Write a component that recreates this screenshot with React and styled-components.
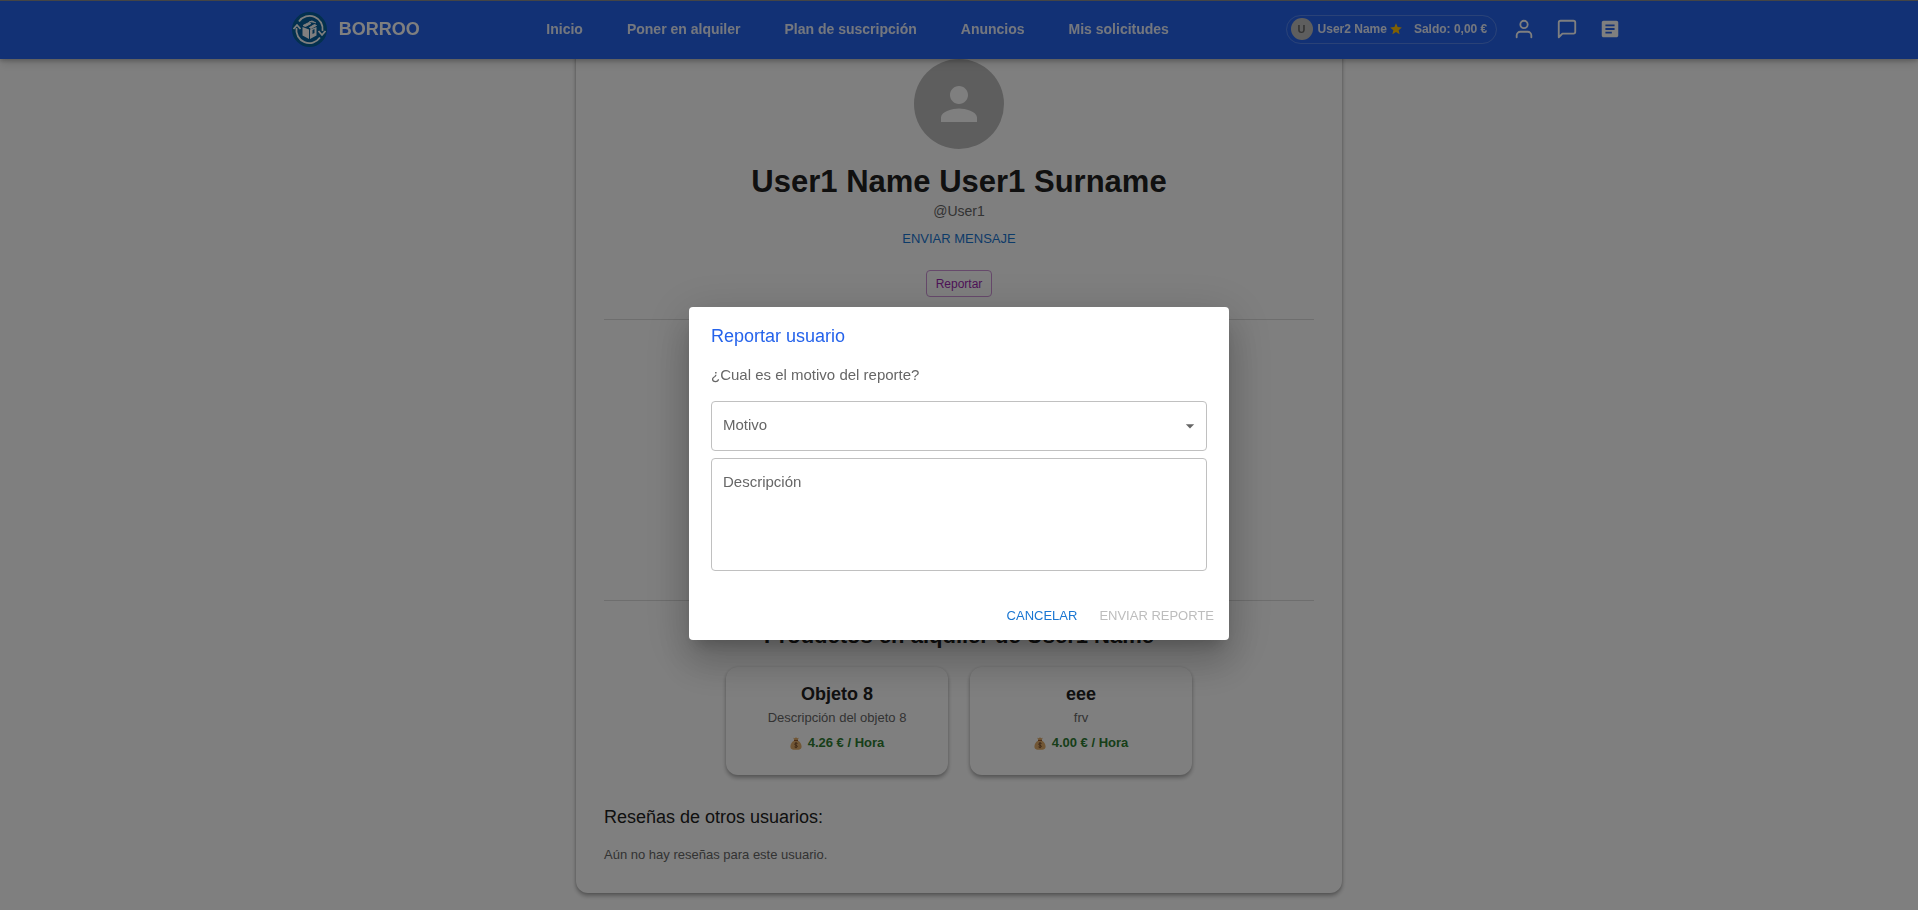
import React from "react";
import styled, { createGlobalStyle } from "styled-components";
import { FiUser, FiMessageSquare } from "react-icons/fi";
import { MdArticle, MdPerson, MdStar, MdArrowDropDown } from "react-icons/md";

const GlobalStyle = createGlobalStyle`
  * { box-sizing: border-box; }
  body {
    margin: 0;
    background: #fff;
    color: #212121;
    font-family: "Liberation Sans", Arial, sans-serif;
    font-size: 13px;
    line-height: 20px;
    overflow: hidden;
  }
  h1, h2, h3, p { margin: 0; }
  button, select, textarea { font-family: inherit; }
  a { color: inherit; text-decoration: none; }
`;

const Header = styled.header`
  position: fixed;
  top: 0;
  left: 0;
  right: 0;
  z-index: 10;
  display: flex;
  justify-content: center;
  height: 59px;
  border-top: 1px solid #8a8a8a;
  background: #2563eb;
  box-shadow: 0 2px 4px rgba(0, 0, 0, 0.2), 0 4px 10px rgba(0, 0, 0, 0.14);
  color: #fff;
`;

const HeaderInner = styled.div`
  display: flex;
  align-items: center;
  justify-content: space-between;
  width: 70%;
  height: 56px;
  padding: 0 4px;
`;

const Brand = styled.a`
  display: flex;
  align-items: center;
  gap: 12px;
  font-size: 18px;
  font-weight: 700;
`;

const Nav = styled.nav`
  display: flex;
  gap: 44px;
  padding-left: 10px;
  font-size: 14px;
  font-weight: 700;
  color: #e8eefc;
`;

const Tools = styled.div`
  display: flex;
  align-items: center;
  gap: 11px;
`;

const Pill = styled.div`
  display: flex;
  align-items: center;
  height: 29px;
  padding: 0 9px 0 4px;
  border: 1px solid rgba(255, 255, 255, 0.22);
  border-radius: 15px;
  font-size: 12px;
  font-weight: 700;
  white-space: nowrap;
  color: #e8eefc;
`;

const Initial = styled.span`
  display: grid;
  place-items: center;
  width: 22px;
  height: 22px;
  margin-right: 5px;
  border-radius: 50%;
  background: #bdbdbd;
  color: #666;
  font-size: 11px;
`;

const Star = styled(MdStar)`
  margin: 0 11px 0 2px;
  color: #ffc107;
`;

const IconButton = styled.button`
  display: grid;
  place-items: center;
  width: 32px;
  height: 32px;
  padding: 0;
  border: 0;
  background: none;
  color: #fff;
`;

const Profile = styled.main`
  width: 40%;
  min-width: 620px;
  max-width: 766px;
  margin: 0 auto 16px;
  padding: 59px 28px 28px;
  border-radius: 12px;
  background: #fff;
  box-shadow: 0 3px 4px rgba(0, 0, 0, 0.3), 0 0 3px rgba(0, 0, 0, 0.16);
`;

const Summary = styled.section`
  display: flex;
  flex-direction: column;
  align-items: center;
  padding-bottom: 22px;
  border-bottom: 1px solid #dcdcdc;
`;

const Avatar = styled.div`
  display: grid;
  place-items: center;
  width: 90px;
  height: 90px;
  margin-bottom: 12px;
  border-radius: 50%;
  background: #bdbdbd;
  color: #fff;
`;

const Name = styled.h1`
  padding-top: 1px;
  font-size: 31px;
  line-height: 39px;
`;

const Handle = styled.p`
  font-size: 14px;
  color: #666;
`;

const MessageButton = styled.button`
  height: 30px;
  margin: 2px 0 17px;
  padding: 0 8px;
  border: 0;
  background: none;
  color: #1976d2;
  font-size: 13px;
`;

const ReportButton = styled.button`
  height: 27px;
  padding: 0 9px;
  border: 1px solid #cd93d7;
  border-radius: 4px;
  background: none;
  color: #9c27b0;
  font-size: 12px;
`;

const Spacer = styled.section`
  height: 281px;
  border-bottom: 1px solid #dcdcdc;
`;

const Products = styled.section`
  padding-top: 20px;
  text-align: center;
`;

const ProductsTitle = styled.h2`
  font-size: 22px;
  line-height: 30px;
`;

const ProductList = styled.div`
  display: flex;
  justify-content: center;
  gap: 22px;
  margin: 16px 0 30px;
`;

const ProductCard = styled.article`
  width: 222px;
  height: 108px;
  padding-top: 15px;
  border-radius: 12px;
  background: #fff;
  box-shadow: 0 3px 4px rgba(0, 0, 0, 0.3), 0 0 3px rgba(0, 0, 0, 0.1);
`;

const ProductName = styled.h3`
  margin-bottom: 2px;
  font-size: 18px;
  line-height: 24px;
`;

const Muted = styled.p`
  color: #666;
`;

const Price = styled.p`
  display: flex;
  justify-content: center;
  align-items: center;
  gap: 6px;
  margin-top: 5px;
  color: #2e7d32;
  font-weight: 700;
`;

const ReviewsTitle = styled.h2`
  margin-bottom: 16px;
  font-size: 18px;
  font-weight: 400;
  line-height: 24px;
`;

const Backdrop = styled.div`
  position: fixed;
  inset: 0;
  z-index: 20;
  display: flex;
  align-items: center;
  justify-content: center;
  padding-top: 37px;
  background: rgba(0, 0, 0, 0.5);
`;

const Dialog = styled.form`
  width: 540px;
  border-radius: 4px;
  background: #fff;
  box-shadow: 0 11px 15px -7px rgba(0, 0, 0, 0.2),
    0 24px 38px 3px rgba(0, 0, 0, 0.14), 0 9px 46px 8px rgba(0, 0, 0, 0.12);
`;

const DialogBody = styled.div`
  display: flex;
  flex-direction: column;
  padding: 16px 22px 20px;
`;

const DialogTitle = styled.h2`
  margin-bottom: 16px;
  color: #2563eb;
  font-size: 18px;
  font-weight: 400;
  line-height: 26px;
`;

const Question = styled.p`
  margin-bottom: 16px;
  color: #666;
  font-size: 15px;
`;

const Field = styled.div`
  position: relative;
  display: flex;
  margin-bottom: 7px;
  color: #666;
  font-size: 15px;
`;

const FieldLabel = styled.label`
  position: absolute;
  top: 14px;
  left: 12px;
  pointer-events: none;
`;

const Select = styled.select`
  width: 100%;
  height: 50px;
  padding: 0 36px 0 12px;
  border: 1px solid #c0c0c0;
  border-radius: 4px;
  background: none;
  appearance: none;
  font-size: 15px;
`;

const Caret = styled(MdArrowDropDown)`
  position: absolute;
  top: 15px;
  right: 7px;
  pointer-events: none;
`;

const TextArea = styled.textarea`
  width: 100%;
  height: 113px;
  padding: 14px 12px;
  border: 1px solid #c0c0c0;
  border-radius: 4px;
  background: none;
  resize: none;
  font-size: 15px;
`;

const Actions = styled.div`
  display: flex;
  justify-content: flex-end;
  gap: 8px;
  padding: 0 8px 8px;
`;

const ActionButton = styled.button`
  height: 34px;
  padding: 0 7px;
  border: 0;
  background: none;
  color: #1976d2;
  font-size: 13px;
  &:disabled { color: #bdbdbd; }
`;

const Logo = () => (
  <svg width="35" height="35" viewBox="0 0 35 35" fill="none" aria-hidden="true">
    <circle cx="17.5" cy="17.5" r="17.5" fill="#06609c" />
    <g stroke="#fff" strokeWidth="1.8">
      <path d="M7 9.500A13 13 0 0 1 30.500 19" />
      <path d="M28 25.500A13 13 0 0 1 4.500 16" />
      <path d="M1.500 17l3.500-4 3.500 4M26.500 19l3.500 4 3.500-4" />
    </g>
    <path d="M10.500 15l6.500 2.500v9.500l-6.500-3.500zM18 17.500l6.500-2.500v8.500l-6.500 3.500z" fill="#fff" />
    <path d="M11 13.500l6-3 2 1-5.500 3zM17.500 15.500l5-3 2 1-5.500 3zM17 10l3-1 4 2" fill="#fff" stroke="#fff" />
    <path d="M20.500 18v4l2-1v-4" fill="#06609c" />
  </svg>
);

const MoneyBag = () => (
  <svg width="12" height="13" viewBox="0 0 12 13" aria-hidden="true">
    <path d="M4.300 3.500L3.300.8l1.500.4L6 .3l1.200.9 1.500-.4-1 2.700C10 4.700 11.600 7 11.600 9.500c0 2.500-1.600 3.300-5.600 3.300S.4 12 .4 9.500C.4 7 2 4.700 4.300 3.500z" fill="#e2ad6b" />
    <path d="M4 3.500h4" stroke="#9a5b2a" strokeWidth="1" />
    <path d="M7.500 6.500C6.500 5.800 4.700 6 4.700 7.200c0 1.300 2.700.8 2.700 2.100 0 1.200-1.900 1.300-2.900.6M6 5.200v6" fill="none" stroke="#744a2a" strokeWidth=".9" />
  </svg>
);

const links = ["Inicio", "Poner en alquiler", "Plan de suscripción", "Anuncios", "Mis solicitudes"];

const products = [
  { name: "Objeto 8", description: "Descripción del objeto 8", price: "4.26 € / Hora" },
  { name: "eee", description: "frv", price: "4.00 € / Hora" },
];

export default function App() {
  return (
    <>
      <GlobalStyle />
      <Header>
        <HeaderInner>
          <Brand href="#"><Logo />BORROO</Brand>
          <Nav>
            {links.map((link) => <a href="#" key={link}>{link}</a>)}
          </Nav>
          <Tools>
            <Pill>
              <Initial>U</Initial>
              <span>User2 Name</span>
              <Star size={14} />
              <span>Saldo: 0,00 €</span>
            </Pill>
            <IconButton aria-label="Perfil"><FiUser size={22} /></IconButton>
            <IconButton aria-label="Mensajes"><FiMessageSquare size={22} /></IconButton>
            <IconButton aria-label="Artículos"><MdArticle size={22} /></IconButton>
          </Tools>
        </HeaderInner>
      </Header>

      <Profile>
        <Summary>
          <Avatar><MdPerson size={54} /></Avatar>
          <Name>User1 Name User1 Surname</Name>
          <Handle>@User1</Handle>
          <MessageButton>ENVIAR MENSAJE</MessageButton>
          <ReportButton>Reportar</ReportButton>
        </Summary>
        <Spacer />
        <Products>
          <ProductsTitle>Productos en alquiler de User1 Name</ProductsTitle>
          <ProductList>
            {products.map((product) => (
              <ProductCard key={product.name}>
                <ProductName>{product.name}</ProductName>
                <Muted>{product.description}</Muted>
                <Price><MoneyBag />{product.price}</Price>
              </ProductCard>
            ))}
          </ProductList>
        </Products>
        <ReviewsTitle>Reseñas de otros usuarios:</ReviewsTitle>
        <Muted>Aún no hay reseñas para este usuario.</Muted>
      </Profile>

      <Backdrop>
        <Dialog role="dialog" aria-labelledby="report-title" onSubmit={(e) => e.preventDefault()}>
          <DialogBody>
            <DialogTitle id="report-title">Reportar usuario</DialogTitle>
            <Question>¿Cual es el motivo del reporte?</Question>
            <Field>
              <FieldLabel htmlFor="reason">Motivo</FieldLabel>
              <Select id="reason"><option value="" /></Select>
              <Caret size={20} />
            </Field>
            <Field>
              <FieldLabel htmlFor="description">Descripción</FieldLabel>
              <TextArea id="description" />
            </Field>
          </DialogBody>
          <Actions>
            <ActionButton type="button">CANCELAR</ActionButton>
            <ActionButton type="submit" disabled>ENVIAR REPORTE</ActionButton>
          </Actions>
        </Dialog>
      </Backdrop>
    </>
  );
}
